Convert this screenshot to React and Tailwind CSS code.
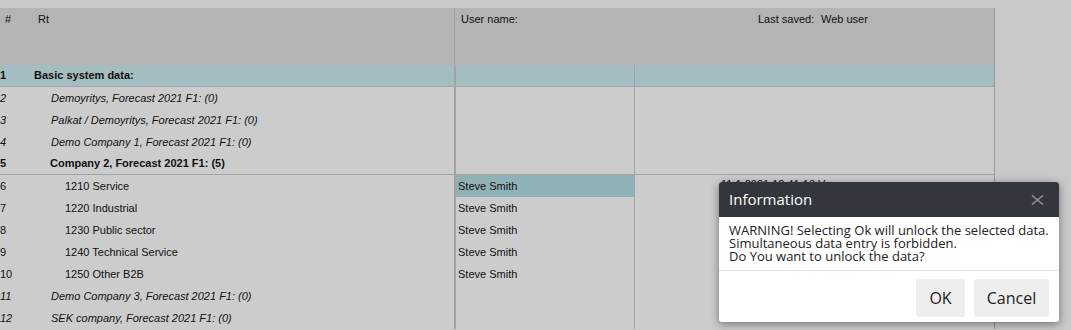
import React from "react";

const rows = [
  { n: "2", label: "Demoyritys, Forecast 2021 F1: (0)", kind: "company" },
  { n: "3", label: "Palkat / Demoyritys, Forecast 2021 F1: (0)", kind: "company" },
  { n: "4", label: "Demo Company 1, Forecast 2021 F1: (0)", kind: "company" },
  { n: "5", label: "Company 2, Forecast 2021 F1: (5)", kind: "open", border: true },
  { n: "6", label: "1210 Service", kind: "item", user: "Steve Smith", saved: "11.1.2021 12:41:13 V", active: true },
  { n: "7", label: "1220 Industrial", kind: "item", user: "Steve Smith" },
  { n: "8", label: "1230 Public sector", kind: "item", user: "Steve Smith" },
  { n: "9", label: "1240 Technical Service", kind: "item", user: "Steve Smith" },
  { n: "10", label: "1250 Other B2B", kind: "item", user: "Steve Smith" },
  { n: "11", label: "Demo Company 3, Forecast 2021 F1: (0)", kind: "company" },
  { n: "12", label: "SEK company, Forecast 2021 F1: (0)", kind: "company" },
];

function Row({ row }) {
  const italic = row.kind === "company";
  const bold = row.kind === "open";
  const labelPad = row.kind === "item" ? "pl-[31px]" : bold ? "pl-[16px]" : "pl-[17px]";

  return (
    <div
      className={
        "flex h-[22px] items-center " +
        (row.border ? "border-b border-[#a3a3a3]" : "")
      }
    >
      <div className={"flex w-[454px] items-center " + (italic ? "italic" : "") + (bold ? " font-bold" : "")}>
        <span className="w-[34px]">{row.n}</span>
        <span className={labelPad}>{row.label}</span>
      </div>
      <div className="h-full w-[180px] border-l-2 border-[#a3a3a3]">
        {row.user && (
          <div className={"flex h-full items-center pl-[2px] " + (row.active ? "bg-[#8fb2b7]" : "")}>
            {row.user}
          </div>
        )}
      </div>
      <div className="flex h-full flex-1 items-center border-l border-[#a3a3a3] pl-[86px]">
        {row.saved && <span className="-mt-[4px]">{row.saved}</span>}
      </div>
    </div>
  );
}

function Dialog() {
  return (
    <div className="absolute left-[719px] top-[182px] w-[340px] overflow-hidden rounded-[3px] bg-white font-['Open_Sans',sans-serif] shadow-[0_2px_8px_rgba(0,0,0,0.45)]">
      <div className="flex h-[35px] items-center justify-between bg-[#33373d] pl-[10px] pr-[15px]">
        <span className="text-[15px] text-white">Information</span>
        <svg width="13" height="10" viewBox="0 0 13 10" className="text-[#8a8d91]">
          <path d="M1 0.5 L12 9.5 M12 0.5 L1 9.5" stroke="currentColor" strokeWidth="1.6" fill="none" />
        </svg>
      </div>
      <div className="border-b border-[#e2e2e2] px-[10px] pb-[7px] pt-[7px] text-[13px] leading-[13px] text-[#222]">
        <p>WARNING! Selecting Ok will unlock the selected data.</p>
        <p>Simultaneous data entry is forbidden.</p>
        <p>Do You want to unlock the data?</p>
      </div>
      <div className="flex justify-end gap-[9px] pb-[5px] pr-[10px] pt-[8px]">
        <button className="h-[38px] w-[49px] rounded-[3px] bg-[#eeeeee] text-[16px] text-[#222]">OK</button>
        <button className="h-[38px] w-[75px] rounded-[3px] bg-[#eeeeee] text-[16px] text-[#222]">Cancel</button>
      </div>
    </div>
  );
}

export default function App() {
  return (
    <div className="relative h-[330px] w-full overflow-hidden bg-[#c9c9c9] pt-[8px] font-['Liberation_Sans',Arial,sans-serif] text-[11px] text-[#111]">
      <div className="w-[995px] border-r border-[#9a9a9a]">
        <div className="flex h-[57px] bg-[#b4b4b2] leading-[14px]">
          <div className="flex w-[454px] pt-[4px]">
            <span className="w-[38px] pl-[5px]">#</span>
            <span>Rt</span>
          </div>
          <div className="flex flex-1 border-l border-[#a3a3a3] pt-[4px] pl-[6px]">
            <span className="w-[297px]">User name:</span>
            <span className="w-[63px]">Last saved:</span>
            <span>Web user</span>
          </div>
        </div>

        <div className="flex h-[22px] items-center border-b border-[#a3a3a3] bg-[#a4bdc1] font-bold">
          <div className="flex w-[454px] items-center">
            <span className="w-[34px]">1</span>
            <span>Basic system data:</span>
          </div>
          <div className="h-full w-[180px] border-l-2 border-[#a3a3a3]" />
          <div className="h-full flex-1 border-l border-[#a3a3a3]" />
        </div>

        <div className="bg-[#cccccc]">
          {rows.map((row) => (
            <Row key={row.n} row={row} />
          ))}
        </div>
      </div>
      <Dialog />
    </div>
  );
}
